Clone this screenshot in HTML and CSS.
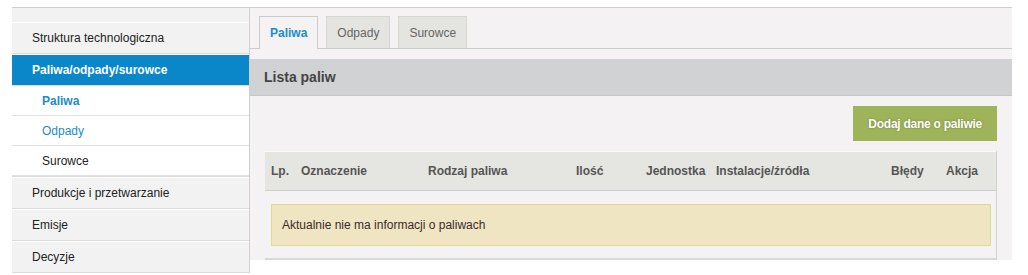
FILE: index.html
```html
<!DOCTYPE html>
<html lang="pl">
<head>
    <meta charset="utf-8">
    <title>Paliwa</title>
    <link rel="stylesheet" href="styles.css">
</head>
<body>
<div class="page">
    <aside class="sidebar">
        <div class="side-spacer"></div>
        <a class="side-item" href="#">Struktura technologiczna</a>
        <a class="side-item active" href="#">Paliwa/odpady/surowce</a>
        <div class="side-sub">
            <a class="sub-item current" href="#">Paliwa</a>
            <a class="sub-item link" href="#">Odpady</a>
            <a class="sub-item" href="#">Surowce</a>
        </div>
        <a class="side-item" href="#">Produkcje i przetwarzanie</a>
        <a class="side-item" href="#">Emisje</a>
        <a class="side-item" href="#">Decyzje</a>
    </aside>

    <main class="content">
        <nav class="tabs">
            <a class="tab active" href="#">Paliwa</a>
            <a class="tab" href="#">Odpady</a>
            <a class="tab" href="#">Surowce</a>
        </nav>

        <h2 class="bar">Lista paliw</h2>

        <div class="actions">
            <a class="btn" href="#">Dodaj dane o paliwie</a>
        </div>

        <div class="table">
            <div class="table-head">
                <span>Lp.</span>
                <span>Oznaczenie</span>
                <span>Rodzaj paliwa</span>
                <span>Ilość</span>
                <span>Jednostka</span>
                <span>Instalacje/źródła</span>
                <span>Błędy</span>
                <span>Akcja</span>
            </div>
            <div class="table-body">
                <div class="alert">Aktualnie nie ma informacji o paliwach</div>
            </div>
        </div>
    </main>
</div>
</body>
</html>
```

FILE: styles.css
```css
body {
    margin: 7px 16px 0 12px;

    font-family: "Liberation Sans", Arial, sans-serif;
    font-size: 12px;
    color: #222;
    background: #fff;
}

a {
    text-decoration: none;
}

.page {
    display: flex;
    align-items: flex-start;
    width: 1000px;

    border-top: 1px solid #cfcfcf;
}

/* sidebar */

.sidebar {
    width: 237px;

    background: #f2f2f2;
    border-right: 1px solid #d0d0d0;
}

.side-spacer {
    height: 14px;
}

.side-item {
    display: flex;
    align-items: center;
    height: 30px;
    padding-left: 20px;

    color: #222;
    border-top: 1px solid #fff;
    border-bottom: 1px solid #dcdcdc;
}

.side-item.active {
    color: #fff;
    font-weight: bold;
    background: #0a87c9;
}

.side-sub {
    background: #fff;
    border-bottom: 1px solid #dcdcdc;
}

.sub-item {
    display: flex;
    align-items: center;
    height: 29px;
    padding-left: 30px;

    color: #222;
    border-bottom: 1px solid #e2e2e2;
}

.sub-item.current {
    color: #1a8bcd;
    font-weight: bold;
}

.sub-item.link {
    color: #1a8bcd;
}

/* content */

.content {
    flex: 1;

    background: #f4f2f3;
}

.tabs {
    display: flex;
    gap: 8px;
    height: 32px;
    padding: 8px 0 0 9px;

    border-bottom: 1px solid #cbcbcb;
}

.tab {
    display: flex;
    align-items: center;
    padding: 0 10px;

    color: #666;
    background: #e4e4e0;
    border: 1px solid #d6d6d2;
    border-bottom: none;
}

.tab.active {
    margin-bottom: -1px;

    color: #1a8bcd;
    font-weight: bold;
    background: #f4f2f3;
    border-color: #cbcbcb;
}

.bar {
    display: flex;
    align-items: center;
    height: 36px;
    margin: 10px 0 0 0;
    padding-left: 14px;

    font-size: 14px;
    color: #444;
    background: #d1d2d4;
    border-bottom: 1px solid #c6c6c6;
}

.actions {
    display: flex;
    justify-content: flex-end;
    padding: 10px 15px 0 0;
}

.btn {
    display: flex;
    align-items: center;
    height: 35px;
    padding: 0 15px;

    font-weight: bold;
    letter-spacing: -0.25px;
    color: #fff;
    background: #9fb35a;
    text-shadow: 0 0 2px rgba(60, 70, 20, .5);
}

.table {
    margin: 10px 15px 0 15px;

    border-right: 1px solid #d2d2d2;
    border-bottom: 2px solid #d8d8d8;
}

.table-head {
    display: grid;
    grid-template-columns: 30px 127px 148px 70px 70px 175px 55px 1fr;
    align-items: center;
    height: 38px;
    padding-left: 6px;

    font-weight: bold;
    color: #555;
    background: #e5e5e1;
    border-top: 1px solid #fafafa;
    border-bottom: 1px solid #cdcdcd;
}

.table-body {
    padding: 13px 5px 12px 6px;
}

.alert {
    display: flex;
    align-items: center;
    height: 40px;
    padding-left: 10px;

    color: #3b2b2b;
    background: #efe5c2;
    border: 1px solid #e0da8e;
}
```
